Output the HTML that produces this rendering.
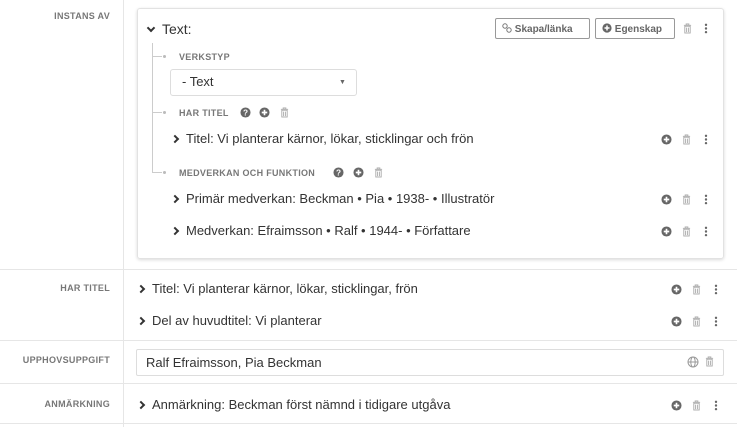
<!DOCTYPE html>
<html><head><meta charset="utf-8"><style>
*{margin:0;padding:0;box-sizing:border-box}
body{width:737px;height:427px;background:#fff;font-family:"Liberation Sans",sans-serif;color:#333;position:relative;overflow:hidden}
.a{position:absolute}
.lbl{font-size:9px;font-weight:bold;color:#777;letter-spacing:.3px;text-transform:uppercase}
.rl{text-align:right;width:110px;left:0}
.t{font-size:13px;color:#333;white-space:nowrap}
.hl{position:absolute;left:0;width:737px;height:1px;background:#e6e6e6}
.chev{display:inline-block;width:6px;height:6px;border-right:2px solid #333;border-bottom:2px solid #333;transform:rotate(-45deg);margin-right:8px;position:relative;top:-1px}
.chevd{transform:rotate(45deg);top:-3px}
svg{position:absolute}
.btn{position:absolute;height:21px;border:1px solid #999;border-radius:2px;font-size:10px;font-weight:bold;color:#666;padding:4px 5px 0 6px;white-space:nowrap}
</style></head><body>
<svg width="0" height="0" style="position:absolute"><defs>
<symbol id="plus" viewBox="0 0 12 12"><circle cx="6" cy="6" r="5.5" fill="#666"/><path d="M6 3v6M3 6h6" stroke="#fff" stroke-width="1.8"/></symbol>
<symbol id="q" viewBox="0 0 12 12"><circle cx="6" cy="6" r="5.5" fill="#666"/><text x="6" y="9.3" font-size="9" font-weight="bold" fill="#fff" text-anchor="middle" font-family="Liberation Sans">?</text></symbol>
<symbol id="trash" viewBox="0 0 10 12"><path d="M1 2.5h8M3.5 2.5V1h3v1.5" stroke="#aaa" fill="none"/><rect x="2" y="3.5" width="6" height="7.5" fill="none" stroke="#aaa"/><path d="M4 5v5M6 5v5" stroke="#aaa"/></symbol>
<symbol id="dots" viewBox="0 0 4 12"><circle cx="2" cy="2" r="1.3" fill="#666"/><circle cx="2" cy="6" r="1.3" fill="#666"/><circle cx="2" cy="10" r="1.3" fill="#666"/></symbol>
<symbol id="glob" viewBox="0 0 12 12"><g fill="none" stroke="#999"><circle cx="6" cy="6" r="5"/><ellipse cx="6" cy="6" rx="2.2" ry="5"/><path d="M1 6h10"/></g></symbol>
</defs></svg>

<div class="a" style="left:123px;top:0;width:1px;height:427px;background:#e6e6e6"></div>
<div class="hl" style="top:269px"></div>
<div class="hl" style="top:340px"></div>
<div class="hl" style="top:383px"></div>
<div class="hl" style="top:423px"></div>

<div class="a lbl rl" style="top:11px">Instans av</div>
<div class="a lbl rl" style="top:283px">Har titel</div>
<div class="a lbl rl" style="top:355px">Upphovsuppgift</div>
<div class="a lbl rl" style="top:399px">Anmärkning</div>

<!-- card -->
<div class="a" style="left:137px;top:8px;width:587px;height:251px;border:1px solid #e2e2e2;border-radius:3px;box-shadow:0 1px 3px rgba(0,0,0,.15)"></div>
<div class="a t" style="left:148px;top:21px;font-size:14px"><span class="chev chevd"></span>Text:</div>
<div class="btn" style="left:495px;top:18px;width:95px"><svg style="position:relative;display:inline-block;vertical-align:-1px" width="10" height="10" viewBox="0 0 10 10"><circle cx="3" cy="3" r="2.2" fill="none" stroke="#777"/><circle cx="7" cy="7" r="2.2" fill="none" stroke="#777"/></svg> Skapa/länka</div>
<div class="btn" style="left:595px;top:18px;width:80px"><svg style="position:relative;display:inline-block;vertical-align:-1px" width="10" height="10"><use href="#plus"/></svg> Egenskap</div>
<svg style="left:683px;top:23px" width="9" height="11"><use href="#trash"/></svg>
<svg style="left:704px;top:23px" width="4" height="11"><use href="#dots"/></svg>

<!-- tree -->
<div class="a" style="left:152px;top:43px;width:1px;height:130px;background:#ccc"></div>
<div class="a" style="left:152px;top:56px;width:10px;height:1px;background:#ccc"></div>
<div class="a" style="left:152px;top:112px;width:10px;height:1px;background:#ccc"></div>
<div class="a" style="left:152px;top:172px;width:10px;height:1px;background:#ccc"></div>
<div class="a" style="left:163px;top:55px;width:3px;height:3px;border-radius:2px;background:#bbb"></div>
<div class="a" style="left:163px;top:111px;width:3px;height:3px;border-radius:2px;background:#bbb"></div>
<div class="a" style="left:163px;top:171px;width:3px;height:3px;border-radius:2px;background:#bbb"></div>

<div class="a lbl" style="left:179px;top:52px">Verkstyp</div>
<div class="a" style="left:170px;top:69px;width:187px;height:27px;border:1px solid #ddd;border-radius:3px"></div>
<div class="a t" style="left:182px;top:74px;font-size:13px">- Text</div>
<div class="a" style="left:339px;top:79px;font-size:7px;color:#666">▼</div>

<div class="a lbl" style="left:179px;top:108px">Har titel</div>
<svg style="left:240px;top:107px" width="11" height="11"><use href="#q"/></svg>
<svg style="left:259px;top:107px" width="11" height="11"><use href="#plus"/></svg>
<svg style="left:280px;top:107px" width="9" height="11"><use href="#trash"/></svg>

<div class="a t" style="left:172px;top:131px"><span class="chev"></span>Titel: Vi planterar kärnor, lökar, sticklingar och frön</div>
<svg style="left:661px;top:134px" width="11" height="11"><use href="#plus"/></svg>
<svg style="left:682px;top:134px" width="9" height="11"><use href="#trash"/></svg>
<svg style="left:704px;top:134px" width="4" height="11"><use href="#dots"/></svg>

<div class="a lbl" style="left:179px;top:168px">Medverkan och funktion</div>
<svg style="left:333px;top:167px" width="11" height="11"><use href="#q"/></svg>
<svg style="left:353px;top:167px" width="11" height="11"><use href="#plus"/></svg>
<svg style="left:374px;top:167px" width="9" height="11"><use href="#trash"/></svg>

<div class="a t" style="left:172px;top:191px"><span class="chev"></span>Primär medverkan: Beckman • Pia • 1938- • Illustratör</div>
<svg style="left:661px;top:194px" width="11" height="11"><use href="#plus"/></svg>
<svg style="left:682px;top:194px" width="9" height="11"><use href="#trash"/></svg>
<svg style="left:704px;top:194px" width="4" height="11"><use href="#dots"/></svg>

<div class="a t" style="left:172px;top:223px"><span class="chev"></span>Medverkan: Efraimsson • Ralf • 1944- • Författare</div>
<svg style="left:661px;top:226px" width="11" height="11"><use href="#plus"/></svg>
<svg style="left:682px;top:226px" width="9" height="11"><use href="#trash"/></svg>
<svg style="left:704px;top:226px" width="4" height="11"><use href="#dots"/></svg>

<!-- har titel -->
<div class="a t" style="left:138px;top:281px"><span class="chev"></span>Titel: Vi planterar kärnor, lökar, sticklingar, frön</div>
<svg style="left:671px;top:284px" width="11" height="11"><use href="#plus"/></svg>
<svg style="left:692px;top:284px" width="9" height="11"><use href="#trash"/></svg>
<svg style="left:714px;top:284px" width="4" height="11"><use href="#dots"/></svg>
<div class="a t" style="left:138px;top:313px"><span class="chev"></span>Del av huvudtitel: Vi planterar</div>
<svg style="left:671px;top:316px" width="11" height="11"><use href="#plus"/></svg>
<svg style="left:692px;top:316px" width="9" height="11"><use href="#trash"/></svg>
<svg style="left:714px;top:316px" width="4" height="11"><use href="#dots"/></svg>

<!-- upphov -->
<div class="a" style="left:136px;top:349px;width:588px;height:27px;border:1px solid #ddd;border-radius:2px"></div>
<div class="a t" style="left:146px;top:355px">Ralf Efraimsson, Pia Beckman</div>
<svg style="left:687px;top:356px" width="12" height="12"><use href="#glob"/></svg>
<svg style="left:705px;top:356px" width="9" height="11"><use href="#trash"/></svg>

<!-- anm -->
<div class="a t" style="left:138px;top:397px"><span class="chev"></span>Anmärkning: Beckman först nämnd i tidigare utgåva</div>
<svg style="left:671px;top:400px" width="11" height="11"><use href="#plus"/></svg>
<svg style="left:692px;top:400px" width="9" height="11"><use href="#trash"/></svg>
<svg style="left:714px;top:400px" width="4" height="11"><use href="#dots"/></svg>
</body></html>
